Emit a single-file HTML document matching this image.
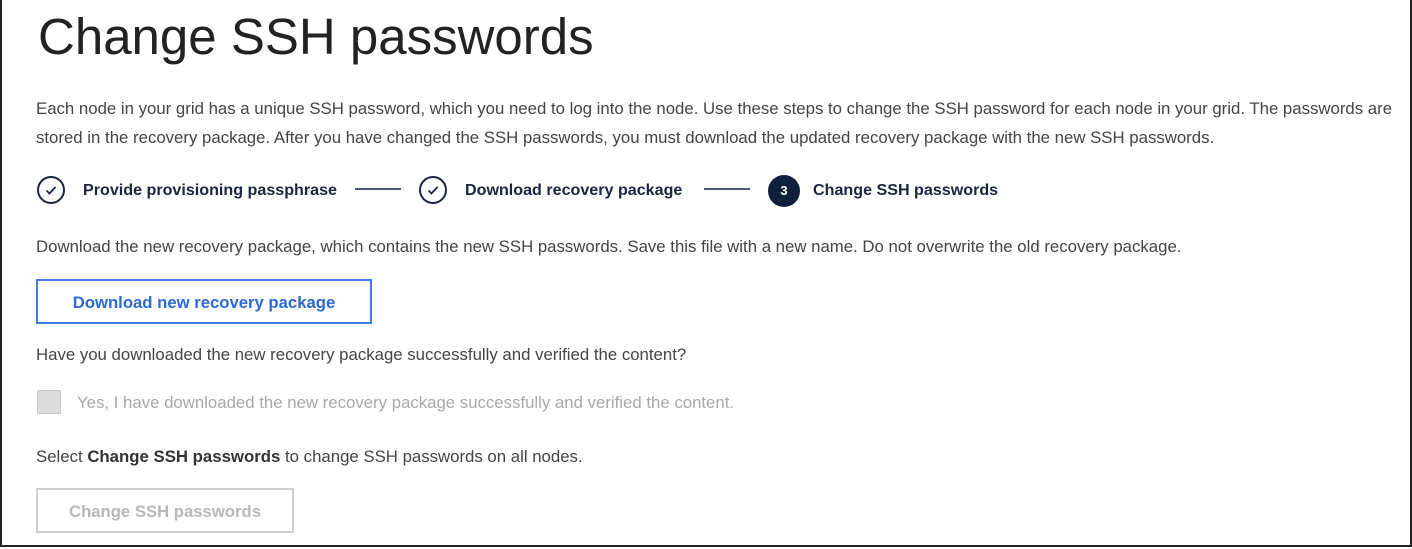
<!DOCTYPE html>
<html><head><style>
html,body{margin:0;padding:0;background:#fff;}
body{width:1412px;height:549px;position:relative;overflow:hidden;font-family:"Liberation Sans",sans-serif;color:#333;}
.frame{position:absolute;left:0;top:0;width:1408px;height:545px;border:2px solid #222;border-top:none;}
.abs{position:absolute;white-space:nowrap;}
h1{position:absolute;left:38px;top:7px;margin:0;font-weight:normal;font-size:51px;color:#222;}
.p{font-size:16.8px;color:#444;}
.step{font-size:16.1px;font-weight:bold;color:#1a2540;}
.circ{position:absolute;width:28px;height:28px;border:2px solid #1a2540;border-radius:50%;box-sizing:border-box;}
.line{position:absolute;height:2px;background:#4a5670;width:46px;}
.btn{position:absolute;box-sizing:border-box;font-size:16.7px;font-weight:bold;text-align:center;}
</style></head><body>
<div class="frame"></div>
<h1>Change SSH passwords</h1>
<div class="abs p" style="left:36px;top:94px;line-height:29px;">Each node in your grid has a unique SSH password, which you need to log into the node. Use these steps to change the SSH password for each node in your grid. The passwords are<br>stored in the recovery package. After you have changed the SSH passwords, you must download the updated recovery package with the new SSH passwords.</div>

<div class="circ" style="left:37px;top:176px;"><svg width="24" height="24" viewBox="0 0 24 24" style="position:absolute;left:0;top:0"><path d="M7.5 12.5l3 3 6-6.5" fill="none" stroke="#1a2540" stroke-width="1.8"/></svg></div>
<div class="abs step" style="left:83px;top:181px;">Provide provisioning passphrase</div>
<div class="line" style="left:355px;top:188px;"></div>
<div class="circ" style="left:419px;top:176px;"><svg width="24" height="24" viewBox="0 0 24 24" style="position:absolute;left:0;top:0"><path d="M7.5 12.5l3 3 6-6.5" fill="none" stroke="#1a2540" stroke-width="1.8"/></svg></div>
<div class="abs step" style="left:465px;top:181px;">Download recovery package</div>
<div class="line" style="left:704px;top:188px;"></div>
<div class="circ" style="left:768px;top:175px;width:32px;height:32px;background:#0f1f3d;border:none;color:#fff;font-size:13px;font-weight:bold;text-align:center;line-height:32px;">3</div>
<div class="abs step" style="left:813px;top:181px;">Change SSH passwords</div>

<div class="abs p" style="left:36px;top:237px;">Download the new recovery package, which contains the new SSH passwords. Save this file with a new name. Do not overwrite the old recovery package.</div>
<div class="btn" style="left:36px;top:279px;width:336px;height:45px;border:2px solid #3f7ee0;color:#2a6ad6;line-height:43px;">Download new recovery package</div>
<div class="abs p" style="left:36px;top:345px;">Have you downloaded the new recovery package successfully and verified the content?</div>
<div class="abs" style="left:37px;top:390px;width:24px;height:24px;box-sizing:border-box;border:1px solid #c8c8c8;background:#dcdcdc;border-radius:2px;"></div>
<div class="abs p" style="left:77px;top:393px;color:#a8a8a8;">Yes, I have downloaded the new recovery package successfully and verified the content.</div>
<div class="abs p" style="left:36px;top:447px;">Select <b style="color:#333">Change SSH passwords</b> to change SSH passwords on all nodes.</div>
<div class="btn" style="left:36px;top:488px;width:258px;height:45px;border:2px solid #cfcfcf;color:#b8b8b8;line-height:43px;">Change SSH passwords</div>
</body></html>
